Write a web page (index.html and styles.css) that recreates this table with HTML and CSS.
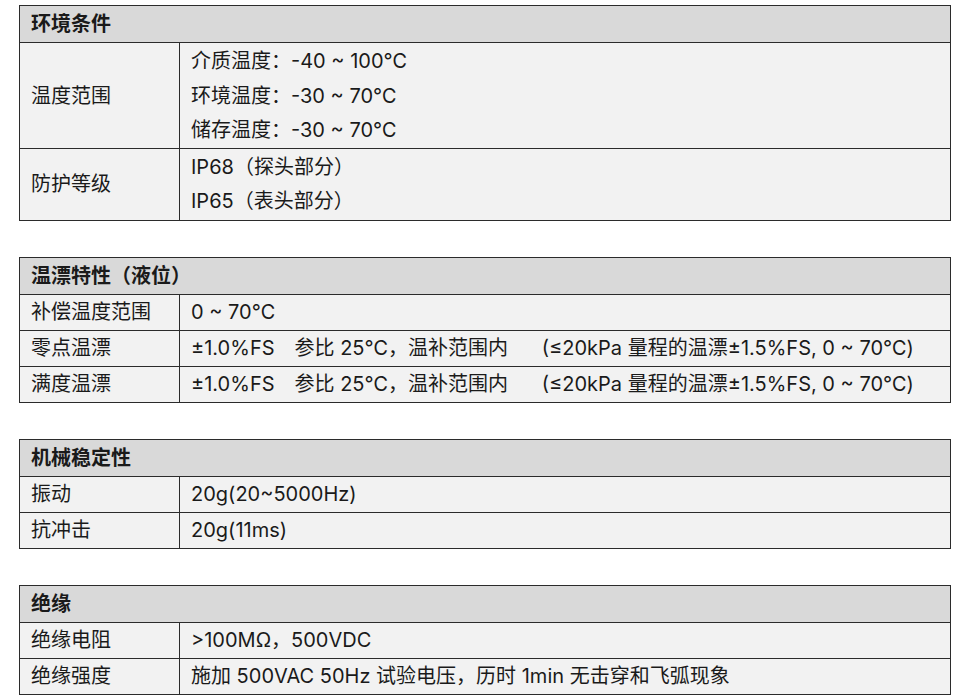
FILE: index.html
```html
<!DOCTYPE html>
<html lang="zh-CN">
<head>
<meta charset="utf-8">
<link rel="stylesheet" href="styles.css">
</head>
<body>
<div class="page">
  <table class="spec">
    <colgroup><col class="c1"><col class="c2"></colgroup>
    <tr class="head"><th colspan="2">环境条件</th></tr>
    <tr class="r3">
      <td class="k">温度范围</td>
      <td class="v"><div class="ln">介质温度：-40 ~ 100℃</div><div class="ln">环境温度：-30 ~ 70℃</div><div class="ln">储存温度：-30 ~ 70℃</div></td>
    </tr>
    <tr class="r2">
      <td class="k">防护等级</td>
      <td class="v"><div class="ln">IP68（探头部分）</div><div class="ln">IP65（表头部分）</div></td>
    </tr>
  </table>

  <table class="spec">
    <colgroup><col class="c1"><col class="c2"></colgroup>
    <tr class="head"><th colspan="2">温漂特性（液位）</th></tr>
    <tr><td class="k">补偿温度范围</td><td class="v">0 ~ 70℃</td></tr>
    <tr><td class="k">零点温漂</td><td class="v pre">±1.0%FS　参比 25℃，温补范围内      (≤20kPa 量程的温漂±1.5%FS, 0 ~ 70℃)</td></tr>
    <tr><td class="k">满度温漂</td><td class="v pre">±1.0%FS　参比 25℃，温补范围内      (≤20kPa 量程的温漂±1.5%FS, 0 ~ 70℃)</td></tr>
  </table>

  <table class="spec">
    <colgroup><col class="c1"><col class="c2"></colgroup>
    <tr class="head"><th colspan="2">机械稳定性</th></tr>
    <tr><td class="k">振动</td><td class="v">20g(20~5000Hz)</td></tr>
    <tr><td class="k">抗冲击</td><td class="v">20g(11ms)</td></tr>
  </table>

  <table class="spec">
    <colgroup><col class="c1"><col class="c2"></colgroup>
    <tr class="head"><th colspan="2">绝缘</th></tr>
    <tr><td class="k">绝缘电阻</td><td class="v">&gt;100MΩ，500VDC</td></tr>
    <tr><td class="k">绝缘强度</td><td class="v">施加 500VAC 50Hz 试验电压，历时 1min 无击穿和飞弧现象</td></tr>
  </table>
</div>
</body>
</html>
```

FILE: styles.css
```css
html, body {
  margin: 0;
  padding: 0;
  background: #ffffff;
}
.page {
  padding: 5px 19px 0 19px;
  display: flex;
  flex-direction: column;
  gap: 36px;
  font-family: "Inter", "Noto Sans CJK SC", sans-serif;
  font-size: 20px;
  color: #1a1a1a;
}
.spec {
  width: 932px;
  border-collapse: collapse;
  table-layout: fixed;
}
.spec col.c1 {
  width: 160px;
}
.spec th, .spec td {
  border: 1px solid #2b2b2b;
  padding: 0 11px;
  text-align: left;
  vertical-align: middle;
  white-space: nowrap;
}
.spec th {
  background: #d9d9d9;
  font-weight: 700;
  height: 36px;
  line-height: 24px;
}
.spec td {
  background: #f2f2f2;
  height: 35px;
  line-height: 24px;
}
.spec .r3 td {
  padding-top: 1px;
  padding-bottom: 0;
}
.spec .r2 td {
  padding-top: 1px;
  padding-bottom: 1px;
}
.ln {
  line-height: 34.5px;
}
.spec td.pre {
  white-space: pre;
}
```
